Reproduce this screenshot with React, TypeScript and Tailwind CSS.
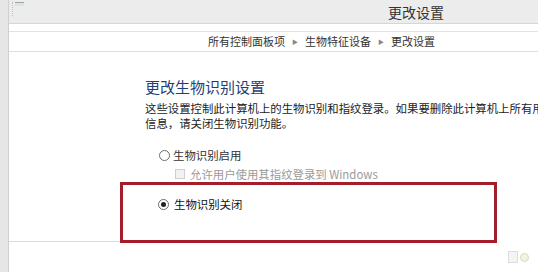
import React from "react";

const font = { fontFamily: '"Noto Sans CJK SC", "Liberation Sans", sans-serif' };

function Radio({ checked }: { checked?: boolean }) {
  return (
    <span className="flex h-[11px] w-[11px] items-center justify-center rounded-full border border-[#6d6d6d] bg-white">
      {checked && <span className="h-[5px] w-[5px] rounded-full bg-[#222]" />}
    </span>
  );
}

export default function App() {
  return (
    <div className="flex h-[272px] w-[538px] overflow-hidden bg-white text-[#333]" style={font}>
      {/* left window edge */}
      <div className="w-[9px] shrink-0 border-r border-[#cfcfcf] bg-[#e6e6e6]" />

      <div className="relative flex flex-1 flex-col">
        {/* title bar */}
        <div className="flex h-[24px] items-center border-b border-[#d6d6d6] bg-[#ececec]">
          <div className="ml-[3px] mt-[-6px] flex h-[14px] w-[14px] items-start">
            <span className="mr-[2px] h-[14px] border-l border-dotted border-[#b8c4b8]" />
            <span className="h-[4px] w-[9px] border-t border-[#9aa69a] bg-[#dde4dd]" />
          </div>
          <span className="ml-[362px] text-[14px] leading-none text-[#333]">更改设置</span>
        </div>

        <div className="h-[8px] border-b border-[#e2e2e2]" />

        {/* breadcrumb */}
        <div className="flex h-[20px] items-center border-b border-[#dedede] pl-[199px] text-[11px] leading-none text-[#333]">
          <span>所有控制面板项</span>
          <span className="mx-[7px] text-[6px] text-[#888]">▶</span>
          <span>生物特征设备</span>
          <span className="mx-[7px] text-[6px] text-[#888]">▶</span>
          <span>更改设置</span>
        </div>

        {/* content */}
        <div className="pl-[136px] pt-[25px]">
          <h1 className="text-[15px] leading-[20px] text-[#1f3f78]">更改生物识别设置</h1>
          <div className="mt-[4px] overflow-hidden text-[11.4px] leading-[15px] text-[#222]">
            <p className="whitespace-nowrap">这些设置控制此计算机上的生物识别和指纹登录。如果要删除此计算机上所有用户的指纹</p>
            <p className="whitespace-nowrap">信息，请关闭生物识别功能。</p>
          </div>

          <div className="mt-[15px] flex items-center gap-[3px] pl-[14px] text-[11.4px] leading-[18px]">
            <Radio />
            <span>生物识别启用</span>
          </div>

          <div className="mt-[1px] flex items-center gap-[5px] pl-[30px] text-[11.4px] leading-[18px] text-[#9a9a9a]">
            <span className="h-[10px] w-[10px] border border-[#cfcfcf] bg-[#f2f2f2]" />
            <span>允许用户使用其指纹登录到 Windows</span>
          </div>

          <div className="mt-[12px] flex items-center gap-[5px] pl-[13px] text-[11.4px] leading-[18px] text-[#111]">
            <Radio checked />
            <span>生物识别关闭</span>
          </div>
        </div>

        <div className="mt-[28px] w-[112px] border-b border-[#dcdcdc]" />

        {/* footer icon */}
        <div className="ml-[499px] mt-[9px] flex h-[12px] w-[24px] items-center gap-[2px] opacity-60">
          <span className="h-[12px] w-[10px] border border-[#c8c8c8] bg-[#eeeeee]" />
          <span className="h-[9px] w-[9px] rounded-full border border-[#b9c48a] bg-[#e8ecd0]" />
        </div>

        {/* red annotation box */}
        <div className="absolute left-[111px] top-[182px] h-[61px] w-[377px] border-[3px] border-[#a31d2b]" />
      </div>
    </div>
  );
}
